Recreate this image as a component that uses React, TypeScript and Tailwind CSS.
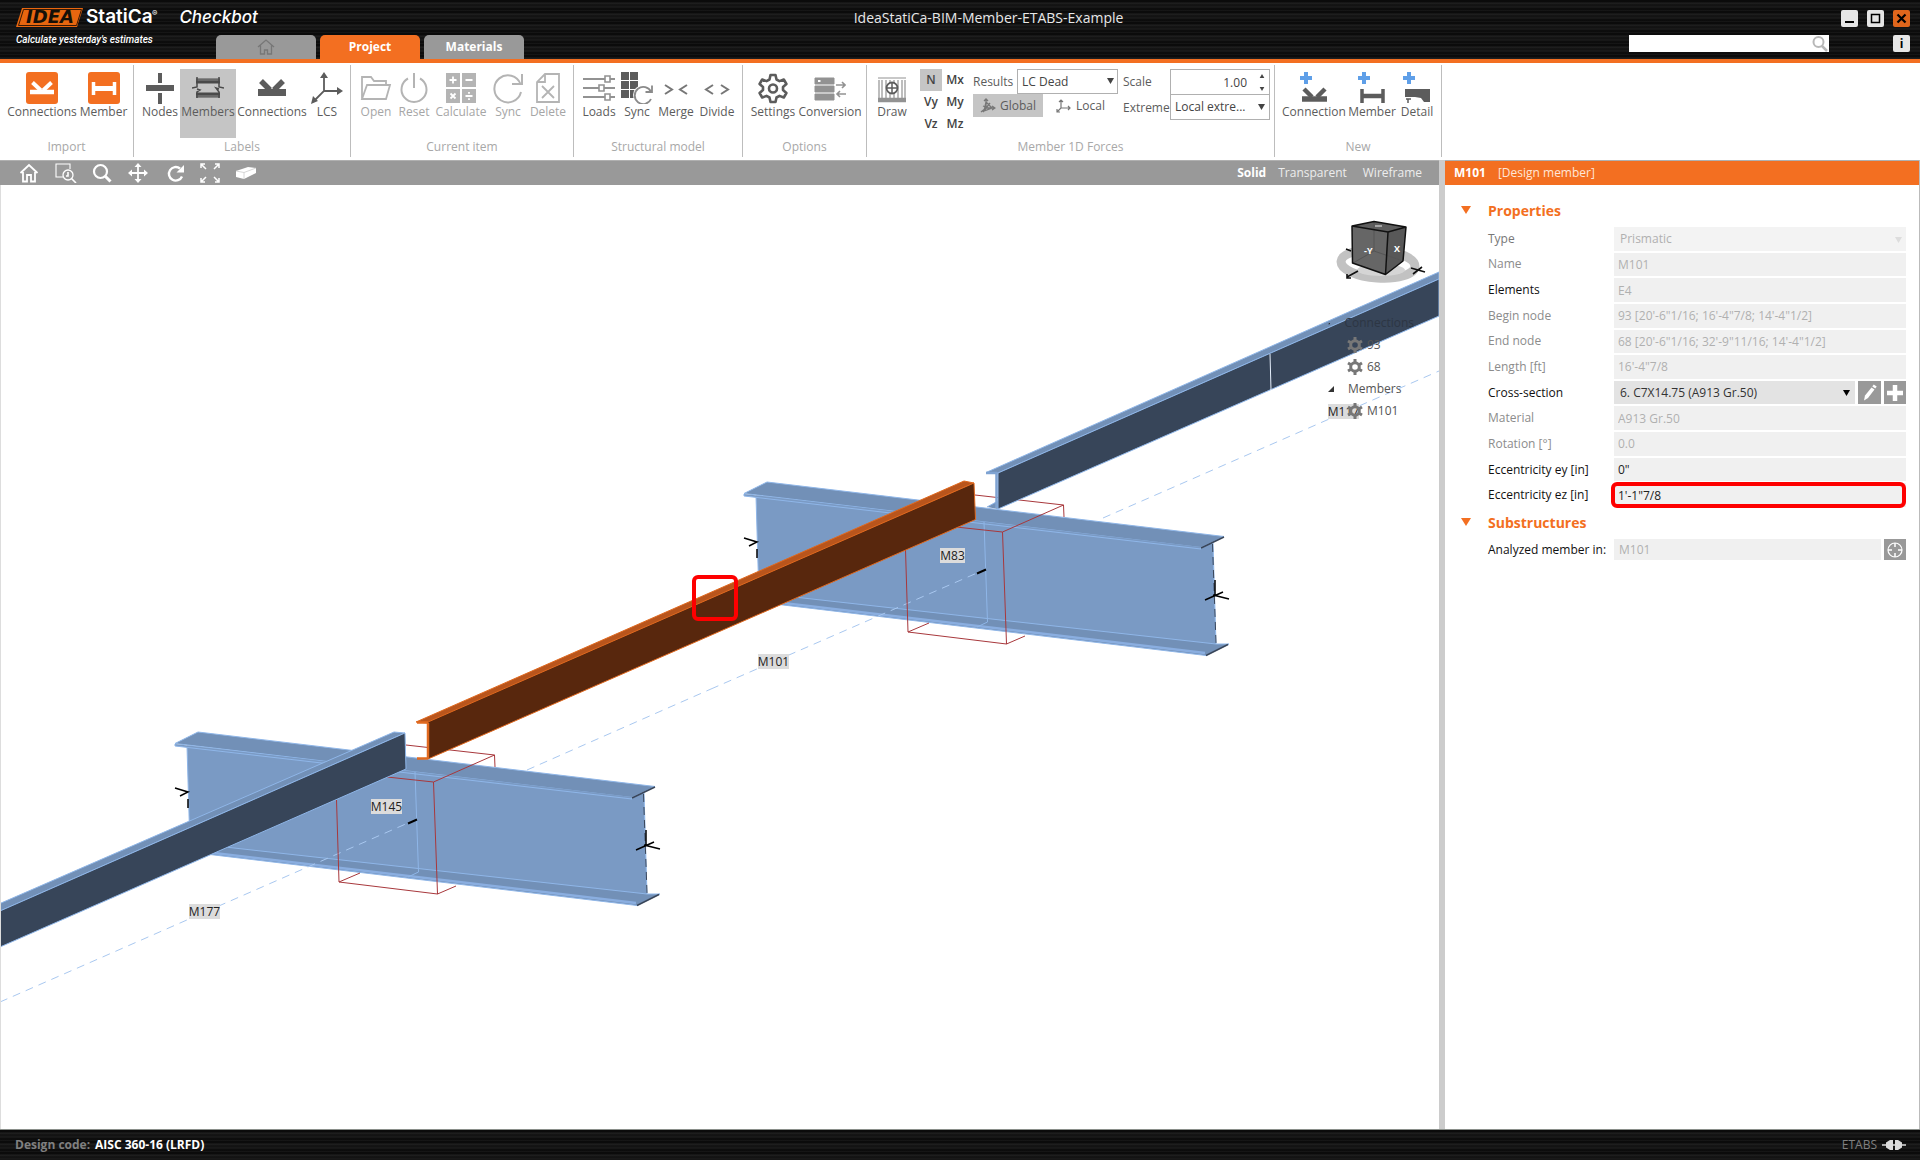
import React, { ReactNode } from "react";

type IconProps = { children: ReactNode; w?: number; h?: number; className?: string };

function Icon({ children, w = 32, h = 32, className = "" }: IconProps) {
  return (
    <svg width={w} height={h} viewBox={`0 0 ${w} ${h}`} fill="none" stroke="currentColor" className={`shrink-0 ${className}`} aria-hidden="true">
      {children}
    </svg>
  );
}

/* ---------- ribbon icons ---------- */

const ImportConnections = () => (
  <Icon>
    <rect x="0" y="0" width="32" height="32" rx="3" fill="#f36f21" stroke="none" />
    <path d="M4 20h24" stroke="#fff" strokeWidth="4.500" />
    <path d="M6.500 10.500L15 18.500M25.500 10.500L17 18.500" stroke="#fff" strokeWidth="4" />
  </Icon>
);
const ImportMember = () => (
  <Icon>
    <rect x="0" y="0" width="32" height="32" rx="3" fill="#f36f21" stroke="none" />
    <path d="M5.500 10v13M26.500 10v13" stroke="#fff" strokeWidth="3.500" />
    <path d="M5 16.500h22" stroke="#fff" strokeWidth="5" />
  </Icon>
);
const NodesIcon = () => (
  <Icon>
    <path d="M2 16h28" strokeWidth="6" />
    <path d="M16 1v10M16 21v11" strokeWidth="4" />
  </Icon>
);
const MembersIcon = () => (
  <Icon className="text-[#4a4a4a]">
    <path d="M4 9h24M4 23h24" strokeWidth="5" />
    <path d="M4 8h24M4 24h24" stroke="#888" strokeWidth="1" />
    <path d="M5 5v10l-5 1M5 17l3 1-3 2v6M27 5v10l5 1M27 17l-3 -1 3 4v6" strokeWidth="1.500" />
  </Icon>
);
const ConnectionsIcon = () => (
  <Icon>
    <path d="M2 20.500h28" strokeWidth="7" />
    <path d="M5 9l9 9M27 9l-9 9" strokeWidth="5.500" />
  </Icon>
);
const LcsIcon = () => (
  <Icon>
    <path d="M13 4v15L3 29M13 19h16" strokeWidth="1.800" />
    <path d="M13 0l4 6H9zM32 19l-6 4v-8zM0 32l2-8 5 5z" fill="currentColor" stroke="none" />
  </Icon>
);
const OpenIcon = () => (
  <Icon className="text-[#b4b4b4]">
    <path d="M8 27H2V5h9l3 4h12v4M2 27L7 13h23l-4 14z" strokeWidth="1.800" />
  </Icon>
);
const ResetIcon = () => (
  <Icon className="text-[#b4b4b4]">
    <path d="M10 6.500a12.500 12.500 0 1 0 12 0M16 1v15" strokeWidth="2" />
  </Icon>
);
const CalculateIcon = () => (
  <Icon className="text-[#b4b4b4]">
    <path d="M1 1h14v14H1zM17 1h14v14H17zM1 17h14v14H1zM17 17h14v14H17z" fill="currentColor" stroke="none" />
    <path d="M4.500 8h7M8 4.500v7M20.500 8h7M5.500 21.500l5 5M10.500 21.500l-5 5M20.500 24h7M24 20v1.800M24 26.200V28" stroke="#fff" strokeWidth="1.800" />
  </Icon>
);
const SyncIcon = () => (
  <Icon className="text-[#b4b4b4]">
    <path d="M28.500 12A13.500 13.500 0 1 0 29 20M30 2v10H20" strokeWidth="2" />
  </Icon>
);
const DeleteIcon = () => (
  <Icon className="text-[#b4b4b4]">
    <path d="M13 2h14v28H5V10zM13 2v8H5" strokeWidth="1.800" />
    <path d="M10 14l12 12M22 14L10 26" strokeWidth="1.800" />
  </Icon>
);
const LoadsIcon = () => (
  <Icon className="text-[#929292]">
    <path d="M0 7h32M0 16h32M0 25h32" strokeWidth="2.200" />
    <path d="M22 4h5v6h-5zM16 13h5v6h-5zM22 22h5v6h-5z" fill="#fff" strokeWidth="1.600" />
  </Icon>
);
const ModelSyncIcon = () => (
  <Icon>
    <path d="M0 0h8v8H0zM9 0h8v8H9zM0 9h8v8H0zM9 9h8v8H9zM0 18h8v8H0zM9 18h8v8H9z" fill="currentColor" stroke="none" />
    <circle cx="22" cy="23" r="10" fill="#fff" stroke="none" />
    <path d="M30 20a8.500 8.500 0 1 0 0 7M31 13.500V20h-6.500" className="text-[#8a8a8a]" strokeWidth="1.800" />
  </Icon>
);
const MergeIcon = () => (
  <Icon className="text-[#777]">
    <path d="M5 13l7 4.500L5 22M27 13l-7 4.500L27 22" strokeWidth="2" />
  </Icon>
);
const DivideIcon = () => (
  <Icon className="text-[#777]">
    <path d="M12 13l-7 4.500 7 4.500M20 13l7 4.500L20 22" strokeWidth="2" />
  </Icon>
);
const SettingsIcon = () => (
  <Icon>
    <path
      d="M13.500 3h5l1 4.500 3 1.600 4.300-1.600 2.600 4.500-3.400 3v3l3.400 3-2.600 4.500-4.300-1.600-3 1.600-1 4.500h-5l-1-4.500-3-1.600-4.300 1.600L2.600 21 6 18v-3l-3.400-3 2.600-4.500 4.300 1.600 3-1.600z"
      strokeWidth="2.600"
      strokeLinejoin="round"
    />
    <circle cx="16" cy="16.500" r="4" strokeWidth="2.600" />
  </Icon>
);
const ConversionIcon = () => (
  <Icon className="text-[#929292]">
    <path d="M1 6h19v6H1zM1 14h19v6H1zM1 22h19v6H1z" fill="currentColor" strokeWidth="1" />
    <path d="M4 9h2.500" stroke="#fff" strokeWidth="2" />
    <path d="M22 13h9M28 10l3 3-3 3M32 22h-9M26 19l-3 3 3 3" strokeWidth="1.600" />
  </Icon>
);
const DrawIcon = () => (
  <Icon>
    <g className="text-[#929292]">
      <path d="M2 6h28M6 8v18M10 8v18M22 8v18M26 8v18M3 8v18M29 8v18M14 8v18M18 8v18" strokeWidth="1.200" />
      <path d="M2 28h28" strokeWidth="4.500" />
    </g>
    <circle cx="16" cy="16" r="5.500" fill="#fff" strokeWidth="1.800" />
    <path d="M16 10v12M10 16h12" strokeWidth="1.500" />
  </Icon>
);
const Plus = () => <path d="M8 0v12M2 6h12" stroke="#5f9fe8" strokeWidth="4" />;
const NewConnectionIcon = () => (
  <Icon>
    <Plus />
    <path d="M4 27h25" strokeWidth="5.500" />
    <path d="M6 17l8 8M27 17l-8 8" strokeWidth="4.500" />
  </Icon>
);
const NewMemberIcon = () => (
  <Icon>
    <Plus />
    <path d="M6 17v14M27 17v14" strokeWidth="3.500" />
    <path d="M6 24h21" strokeWidth="4.500" />
  </Icon>
);
const NewDetailIcon = () => (
  <Icon>
    <Plus />
    <path d="M4 17h25v13h-6l-3-4-6-1H4z" fill="currentColor" stroke="none" />
    <path d="M5 27h5M7 27v4" strokeWidth="1.500" />
  </Icon>
);

/* ---------- ribbon parts ---------- */

function Tool({ label, icon, width, active, disabled }: { label: string; icon: ReactNode; width: string; active?: boolean; disabled?: boolean }) {
  return (
    <button
      type="button"
      disabled={disabled}
      className={`flex h-[69px] shrink-0 flex-col items-center pt-[3px] ${width} ${active ? "bg-[#c5c5c5]" : ""} ${disabled ? "text-[#a6a6a6]" : "text-[#5c5c5c]"}`}
    >
      {icon}
      <span className="text-[12px] leading-4 whitespace-nowrap">{label}</span>
    </button>
  );
}

function Group({ title, width, pad, children }: { title: string; width: string; pad: string; children: ReactNode }) {
  return (
    <section aria-label={title} className={`flex h-[92px] shrink-0 flex-col border-r border-[#bdbdbd] ${width}`}>
      <div className={`flex h-[74px] shrink-0 pt-1 ${pad}`}>{children}</div>
      <div className="text-center text-[12px] leading-4 text-[#a8a8a8]">{title}</div>
    </section>
  );
}

function Arrow({ className = "" }: { className?: string }) {
  return (
    <svg width="7" height="6" viewBox="0 0 7 6" className={className} aria-hidden="true">
      <path d="M0 0h7L3.500 6z" fill="currentColor" />
    </svg>
  );
}

function Force({ children, active }: { children: string; active?: boolean }) {
  return (
    <button type="button" className={`h-[22px] w-[22px] text-[12px] leading-4 font-semibold text-[#444] ${active ? "bg-[#c5c5c5]" : ""}`}>
      {children}
    </button>
  );
}

function Ribbon() {
  return (
    <div className="flex h-[97px] shrink-0 bg-white pt-[2px]">
      <Group title="Import" width="w-[134px]" pad="pl-[9px]">
        <Tool label="Connections" width="w-[66px]" icon={<ImportConnections />} />
        <Tool label="Member" width="w-[57px]" icon={<ImportMember />} />
      </Group>
      <Group title="Labels" width="w-[217px]" pad="pl-[6px]">
        <Tool label="Nodes" width="w-10" icon={<NodesIcon />} />
        <Tool label="Members" width="w-14" active icon={<MembersIcon />} />
        <Tool label="Connections" width="w-[72px]" icon={<ConnectionsIcon />} />
        <Tool label="LCS" width="w-[38px]" icon={<LcsIcon />} />
      </Group>
      <Group title="Current item" width="w-[223px]" pad="pl-[6px]">
        <Tool label="Open" width="w-[38px]" disabled icon={<OpenIcon />} />
        <Tool label="Reset" width="w-[38px]" disabled icon={<ResetIcon />} />
        <Tool label="Calculate" width="w-14" disabled icon={<CalculateIcon />} />
        <Tool label="Sync" width="w-[38px]" disabled icon={<SyncIcon />} />
        <Tool label="Delete" width="w-[42px]" disabled icon={<DeleteIcon />} />
      </Group>
      <Group title="Structural model" width="w-[169px]" pad="pl-1">
        <Tool label="Loads" width="w-[42px]" icon={<LoadsIcon />} />
        <Tool label="Sync" width="w-[34px]" icon={<ModelSyncIcon />} />
        <Tool label="Merge" width="w-11" icon={<MergeIcon />} />
        <Tool label="Divide" width="w-[38px]" icon={<DivideIcon />} />
      </Group>
      <Group title="Options" width="w-[124px]" pad="pl-1">
        <Tool label="Settings" width="w-[52px]" icon={<SettingsIcon />} />
        <Tool label="Conversion" width="w-[62px]" icon={<ConversionIcon />} />
      </Group>
      <Group title="Member 1D Forces" width="w-[408px]" pad="pl-1">
        <Tool label="Draw" width="w-[42px]" icon={<DrawIcon />} />
        <div className="ml-[7px] grid h-[66px] w-[48px] shrink-0 grid-cols-2">
          <Force active>N</Force>
          <Force>Mx</Force>
          <Force>Vy</Force>
          <Force>My</Force>
          <Force>Vz</Force>
          <Force>Mz</Force>
        </div>
        <div className="ml-[5px] flex w-[145px] shrink-0 flex-col text-[12px] leading-4 text-[#5c5c5c]">
          <div className="flex h-[25px] items-center">
            <label htmlFor="results" className="w-11 shrink-0">Results</label>
            <div className="relative h-full flex-1">
              <select id="results" defaultValue="LC Dead" className="h-full w-full appearance-none border border-[#b0b0b0] bg-white pl-1 text-[#444]">
                <option>LC Dead</option>
              </select>
              <Arrow className="pointer-events-none absolute top-[9px] right-1 text-[#444]" />
            </div>
          </div>
          <div className="flex h-[23px]">
            <button type="button" className="flex w-[70px] items-center justify-center gap-1 bg-[#c5c5c5]">
              <Icon w={16} h={16} className="text-[#777]">
                <path d="M6 1v9L1 14M6 10h9M3 8l8 3M10 5l-7 9M12 8l3 2-3 2M4 3l2-2 2 2M6 4l6 6-8 3z" strokeWidth="1.300" />
              </Icon>
              Global
            </button>
            <button type="button" className="flex flex-1 items-center justify-center gap-1">
              <Icon w={16} h={16} className="text-[#777]">
                <path d="M5 2v8L1 14M5 10h9M12 8l2 2-2 2M3 4l2-2 2 2M1 11v3h3" strokeWidth="1.200" />
              </Icon>
              Local
            </button>
          </div>
        </div>
        <div className="ml-[5px] w-[147px] shrink-0 text-[12px] leading-4 text-[#5c5c5c]">
          <div className="flex h-[26px] items-center">
            <label htmlFor="scale" className="w-[47px] shrink-0">Scale</label>
            <div className="relative h-full flex-1">
              <input id="scale" defaultValue="1.00" className="h-full w-full border border-[#b0b0b0] bg-white pr-[22px] text-right text-[#444]" />
              <button type="button" aria-label="Increase" className="absolute top-[5px] right-[5px] text-[#444]">
                <Arrow className="block h-1 w-[6px] rotate-180" />
              </button>
              <button type="button" aria-label="Decrease" className="absolute right-[5px] bottom-1 text-[#444]">
                <Arrow className="block h-1 w-[6px]" />
              </button>
            </div>
          </div>
          <div className="flex h-[25px] items-center">
            <label htmlFor="extreme" className="w-[47px] shrink-0">Extreme</label>
            <div className="relative h-full flex-1">
              <select id="extreme" className="h-full w-full appearance-none border border-t-0 border-[#b0b0b0] bg-white pl-1 text-[#444]">
                <option>Local extre...</option>
              </select>
              <Arrow className="pointer-events-none absolute top-[9px] right-[5px] text-[#444]" />
            </div>
          </div>
        </div>
      </Group>
      <Group title="New" width="w-[167px]" pad="pl-[6px]">
        <Tool label="Connection" width="w-[66px]" icon={<NewConnectionIcon />} />
        <Tool label="Member" width="w-[50px]" icon={<NewMemberIcon />} />
        <Tool label="Detail" width="w-10" icon={<NewDetailIcon />} />
      </Group>
    </div>
  );
}

/* ---------- title bar ---------- */

const METAL =
  "bg-[#101010] bg-[repeating-linear-gradient(180deg,#0b0b0b_0px,#0b0b0b_2px,#222_3px,#101010_5px,#1c1c1c_7px,#080808_9px,#1a1a1a_11px)]";

function Header() {
  return (
    <header className={`flex h-[63px] shrink-0 justify-between border-b-4 border-[#f36f21] ${METAL}`}>
      <div className="flex h-full">
        <div className="w-[216px] shrink-0 pt-1 pl-4 text-white">
          <div className="flex items-center">
            <div className="relative flex h-[26px] w-[68px] shrink-0 items-center justify-center">
              <svg viewBox="0 0 68 26" width="68" height="26" className="absolute inset-0" aria-hidden="true">
                <path d="M6 4h61l-6 19H0z" fill="#e8660f" />
                <path d="M7.500 5.500h58l-5 16H2.500z" fill="none" stroke="#3a1a04" strokeWidth="1" />
              </svg>
              <span className="relative font-['DejaVu_Sans'] text-[18px] leading-5 font-bold text-[#161008] italic">IDEA</span>
            </div>
            <span className="ml-[2px] w-[66px] shrink-0 font-['Inter'] text-[19px] leading-[26px] font-semibold">StatiCa</span>
            <sup className="-top-1 font-['Inter'] text-[8px]">®</sup>
            <span className="ml-[22px] font-['Inter'] text-[17px] leading-[26px] font-medium whitespace-nowrap italic">Checkbot</span>
          </div>
          <div className="font-['Roboto'] text-[10px] leading-5 font-medium whitespace-nowrap italic">Calculate yesterday's estimates</div>
        </div>
        <nav className="flex items-end gap-1 text-[12px] font-bold text-white">
          <button type="button" aria-label="Home" className="flex h-6 w-[100px] items-center justify-center rounded-t-[5px] bg-[#999]">
            <Icon w={18} h={16} className="text-[#777]">
              <path d="M1 8l8-7 8 7M3.500 6.500V15h4v-4h3v4h4V6.500" strokeWidth="1.300" />
            </Icon>
          </button>
          <button type="button" className="h-6 w-[100px] rounded-t-[5px] bg-[#f36f21]">Project</button>
          <button type="button" className="h-6 w-[100px] rounded-t-[5px] bg-[#999]">Materials</button>
        </nav>
      </div>
      <h1 className="flex-1 pt-[10px] pr-[176px] text-center text-[14px] leading-4 text-[#e8e8e8]">IdeaStatiCa-BIM-Member-ETABS-Example</h1>
      <div className="flex flex-col items-end pt-[10px] pr-[10px]">
        <div className="flex gap-[9px] text-black">
          <button type="button" aria-label="Minimize" className="h-[17px] w-[17px] rounded-[2px] bg-[#e6e6e6]">
            <Icon w={17} h={17}><path d="M4 12h9" strokeWidth="2" /></Icon>
          </button>
          <button type="button" aria-label="Maximize" className="h-[17px] w-[17px] rounded-[2px] bg-[#e6e6e6]">
            <Icon w={17} h={17}><path d="M4.500 4.500h8v8h-8z" strokeWidth="1.500" /></Icon>
          </button>
          <button type="button" aria-label="Close" className="h-[17px] w-[17px] rounded-[2px] bg-[#e0661c]">
            <Icon w={17} h={17}><path d="M4.500 4.500l8 8M12.500 4.500l-8 8" strokeWidth="2.200" /></Icon>
          </button>
        </div>
        <div className="mt-2 flex items-center gap-16">
          <div className="relative h-[17px] w-[200px]">
            <input aria-label="Search" className="block h-full w-full bg-white px-1 text-[12px]" />
            <Icon w={17} h={17} className="absolute top-0 right-0 text-[#b8b8b8]">
              <circle cx="6.500" cy="7" r="5" strokeWidth="2" />
              <path d="M10 11l5 5" strokeWidth="2.500" />
            </Icon>
          </div>
          <button type="button" aria-label="Info" className="h-[17px] w-[17px] rounded-[2px] bg-[#e6e6e6] text-center text-[12px] leading-4 font-bold text-black">
            i
          </button>
        </div>
      </div>
    </header>
  );
}

/* ---------- view toolbar ---------- */

function ViewBar() {
  const btn = "flex h-5 items-center justify-center";
  return (
    <div className="flex h-[25px] shrink-0 items-center border-t border-[#b0b0b0] bg-[#999] pr-[17px] text-white">
      <button type="button" aria-label="Home view" className={`${btn} ml-4 w-[26px]`}>
        <Icon w={20} h={20}><path d="M1.500 10L10 2l8.500 8M4 9v9.500h4V12h4v6.500h4V9" strokeWidth="1.800" /></Icon>
      </button>
      <button type="button" aria-label="Zoom window" className={`${btn} ml-3 w-6`}>
        <Icon w={22} h={20}>
          <path d="M8 14H1V1h14v5" strokeWidth="1.100" />
          <circle cx="13" cy="12" r="5" strokeWidth="1.300" /><path d="M16.500 15.500L21 20M13 9v4h-2" strokeWidth="1.600" />
        </Icon>
      </button>
      <button type="button" aria-label="Zoom" className={`${btn} ml-3 w-6`}>
        <Icon w={20} h={20}><circle cx="8.500" cy="8.500" r="6.500" strokeWidth="2.200" /><path d="M13 13l5.500 5.500" strokeWidth="3" /></Icon>
      </button>
      <button type="button" aria-label="Pan" className={`${btn} ml-3 w-6`}>
        <Icon w={20} h={20}>
          <path d="M10 3v14M3 10h14" strokeWidth="1.800" />
          <path d="M10 0l3.500 4h-7zM10 20l3.500-4h-7zM0 10l4-3.500v7zM20 10l-4-3.500v7z" fill="currentColor" stroke="none" />
        </Icon>
      </button>
      <button type="button" aria-label="Rotate" className={`${btn} ml-[14px] w-6`}>
        <Icon w={20} h={20}>
          <path d="M16 13.500A6.800 6.800 0 1 1 14 5.500" strokeWidth="2.400" />
          <path d="M18 2v7.500h-7.500z" fill="currentColor" stroke="none" />
        </Icon>
      </button>
      <button type="button" aria-label="Fit all" className={`${btn} ml-[10px] w-6`}>
        <Icon w={20} h={20}>
          <path d="M1 5V1h4M1 1l5 5M15 1h4v4M19 1l-5 5M1 15v4h4M1 19l5-5M19 15v4h-4M19 19l-5-5" strokeWidth="1.500" />
        </Icon>
      </button>
      <button type="button" aria-label="Perspective" className={`${btn} ml-3 w-6`}>
        <Icon w={20} h={14}>
          <path d="M0 5l12-4 8 1v5L8 13l-8-2z" fill="currentColor" stroke="none" />
          <path d="M0 5l8 1.500L20 2M8 6.500V13" stroke="#ccc" strokeWidth=".8" />
        </Icon>
      </button>
      <div className="ml-auto flex gap-3 text-[12px] leading-4">
        <button type="button" className="font-bold">Solid</button>
        <button type="button" className="text-[#ededed]">Transparent</button>
        <button type="button" className="ml-1 text-[#ededed]">Wireframe</button>
      </div>
    </div>
  );
}

/* ---------- 3D scene ---------- */

const EDGE = "#8fb6e8";

/* Flanges, web and axis marks of one girder. */
function Girder() {
  return (
    <g>
      <path d="M187 746L644 793L647 895L190 848z" fill="#7a9ac4" stroke={EDGE} strokeWidth="1" />
      <path d="M189 843L647 894H660L637 905.500L189 852z" fill="#7290b7" stroke={EDGE} strokeWidth="1" />
      <path d="M189 850L636 903" stroke="#8aaee0" strokeWidth="2.500" />
      <path d="M198 732L655 786.500L632 797.500L175 743.500z" fill="#7290b7" stroke={EDGE} strokeWidth="1" />
      <path d="M175 744v2L632 799v-2" fill="#7a9ac4" stroke={EDGE} strokeWidth="1" />
      <path d="M632 798l23-11M637 905.500l22-11" stroke="#3a4659" strokeWidth="1.500" />
      <path d="M643.500 794L647 893" stroke="#3a4659" strokeWidth="1" strokeDasharray="8 5" />
      <path d="M415 772L418.500 872L408 877" stroke={EDGE} strokeWidth="1" fill="none" />
      <path d="M408 823.500l9-4" stroke="#000" strokeWidth="2" />
      <path d="M646 830v15M636 850l18-8M644 845l16 4" stroke="#000" strokeWidth="1.500" />
      <path d="M175 788l13 4-8 4M188 799v9" stroke="#000" strokeWidth="1.500" fill="none" />
    </g>
  );
}

/* Bounding box of a connection around a girder. */
function ConnectionBox() {
  return (
    <path
      d="M406 745L494.500 755L495 767M494.500 755L433.500 782L387 777M433.500 782L437.500 894L339 882L336.500 800M339 882L360 873M437.500 894L456 886"
      stroke="#a8383c" strokeWidth="1" fill="none"
    />
  );
}

function NodeLabel({ x, y, w, children }: { x: number; y: number; w: number; children: string }) {
  return (
    <g>
      <rect x={x} y={y} width={w} height="15" fill="#dcdcdc" />
      <text x={x + w / 2} y={y + 12} textAnchor="middle" className="fill-[#222] font-['Open_Sans','Noto_Sans',sans-serif] text-[12px]">
        {children}
      </text>
    </g>
  );
}

function Scene() {
  return (
    <svg viewBox="1 185 1438 944" preserveAspectRatio="xMinYMin slice" className="absolute inset-0 h-full w-full" fill="none">
      <g stroke="#a9c8f0" strokeWidth="1" strokeDasharray="8 6">
        <path d="M527 770L711 689" />
        <path d="M1103 518L1439 371" />
      </g>

      <Girder />
      <path d="M0 1002L408 823" stroke="#a9c8f0" strokeWidth="1" strokeDasharray="8 6" />
      <ConnectionBox />
      <path d="M0 903.500L394 732L405 733L0 911z" fill="#7290b7" stroke={EDGE} />
      <path d="M0 911L405 733L406 769L0 947z" fill="#374559" stroke={EDGE} />

      <g transform="translate(569 -250)">
        <Girder />
        <path d="M142 939L408 823" stroke="#a9c8f0" strokeWidth="1" strokeDasharray="8 6" />
        <ConnectionBox />
      </g>

      <path d="M416 722L964 481L974 483L429 723z" fill="#b9551c" stroke="#e0691f" />
      <path d="M428 722L974 483L975.500 519.500L428 759z" fill="#58270d" stroke="#e0691f" />
      <path d="M417 722.500h11M428 723v35M417 758.500h11" stroke="#e0691f" strokeWidth="2.500" />

      <path d="M987 507l11-6v8" fill="#7290b7" stroke={EDGE} />
      <path d="M986 472.500L1439 272L1439 279L998 473z" fill="#7290b7" stroke={EDGE} />
      <path d="M998 473L1439 279L1439 316L998 509z" fill="#374559" stroke={EDGE} />
      <path d="M986 473h11M996.500 473v35" stroke="#7fa3d2" strokeWidth="2.500" />
      <path d="M1270 354l1 36" stroke="#e5eefb" strokeWidth="1" />

      <NodeLabel x={189} y={904} w={31}>M177</NodeLabel>
      <NodeLabel x={371} y={799} w={31}>M145</NodeLabel>
      <NodeLabel x={758} y={654} w={31}>M101</NodeLabel>
      <NodeLabel x={940} y={548} w={25}>M83</NodeLabel>
      <NodeLabel x={1328} y={404} w={31}>M117</NodeLabel>

      <rect x="694" y="577" width="42" height="42" rx="4" stroke="#fe0000" strokeWidth="4" />

      {/* orientation cube */}
      <ellipse cx="1378" cy="264" rx="37" ry="14" stroke="#c2c2c2" strokeWidth="9" transform="rotate(4 1378 264)" />
      <ellipse cx="1381" cy="270" rx="24" ry="6" fill="#d5d5d5" />
      <path d="M1352 226L1388 232L1385.500 274.500L1352.500 263z" fill="#666" />
      <path d="M1388 232L1406 227L1403 261L1385.500 274.500z" fill="#585858" />
      <path d="M1352 226L1374 221.500L1406 227L1388 232z" fill="#5e5e5e" />
      <path d="M1374 222v29l-21 12M1374 251l29 10" stroke="#555" strokeWidth="1" />
      <path d="M1352 226L1388 232L1385.500 274.500L1352.500 263zM1388 232L1406 227L1403 261L1385.500 274.500M1352 226L1374 221.500L1406 227" stroke="#111" strokeWidth="1.500" strokeLinejoin="round" />
      <g className="fill-white font-['Open_Sans',sans-serif] text-[9px] font-bold">
        <text x="1364" y="254">-Y</text>
        <text x="1394" y="252">X</text>
      </g>
      <path d="M1375 226h7" stroke="#eee" strokeWidth="1" />
      <path d="M1411 268l14 4M1413 274l9-7M1347 277l11-6M1347 274v4h4M1346 249l5 2" stroke="#111" strokeWidth="1.600" />
    </svg>
  );
}

function TreeGear() {
  return (
    <Icon w={16} h={16} className="text-[#777]">
      <circle cx="8" cy="8" r="4.300" strokeWidth="3" />
      <path d="M8 0v3M8 13v3M1 4l2.600 1.500M12.400 10.500L15 12M1 12l2.600-1.500M12.400 5.500L15 4" strokeWidth="3" />
    </Icon>
  );
}
function TreeHead({ children, faint }: { children: string; faint?: boolean }) {
  return (
    <li className="flex h-[22px] items-center">
      <svg width="6" height="6" viewBox="0 0 6 6" aria-hidden="true"><path d="M6 0v6H0z" fill="#333" /></svg>
      <span className={`ml-[14px] ${faint ? "text-[#2d3644]" : ""}`}>{children}</span>
    </li>
  );
}
function TreeItem({ children }: { children: string }) {
  return (
    <li className="flex h-[22px] items-center gap-1 pl-[19px]">
      <TreeGear />
      {children}
    </li>
  );
}

function Viewport() {
  return (
    <div className="relative min-h-0 flex-1 overflow-hidden border-l border-[#ddd] bg-white">
      <Scene />
      <ul className="absolute top-[127px] right-[25px] w-[86px] text-[12px] leading-4 text-[#555]">
        <TreeHead faint>Connections</TreeHead>
        <TreeItem>93</TreeItem>
        <TreeItem>68</TreeItem>
        <TreeHead>Members</TreeHead>
        <TreeItem>M101</TreeItem>
      </ul>
    </div>
  );
}

/* ---------- property panel ---------- */

type Prop = { id: string; label: string; value: string; tone: "dim" | "label" | "live" };
const TOP: Prop[] = [
  { id: "name", label: "Name", value: "M101", tone: "dim" },
  { id: "elements", label: "Elements", value: "E4", tone: "label" },
  { id: "begin", label: "Begin node", value: "93 [20'-6\"1/16; 16'-4\"7/8; 14'-4\"1/2]", tone: "dim" },
  { id: "end", label: "End node", value: "68 [20'-6\"1/16; 32'-9\"11/16; 14'-4\"1/2]", tone: "dim" },
  { id: "length", label: "Length [ft]", value: "16'-4\"7/8", tone: "dim" },
];
const BOTTOM: Prop[] = [
  { id: "material", label: "Material", value: "A913 Gr.50", tone: "dim" },
  { id: "rotation", label: "Rotation [°]", value: "0.0", tone: "dim" },
  { id: "ey", label: "Eccentricity ey [in]", value: "0\"", tone: "live" },
  { id: "ez", label: "Eccentricity ez [in]", value: "1'-1\"7/8", tone: "live" },
];

function Field({ p }: { p: Prop }) {
  return (
    <div className="flex items-center">
      <label htmlFor={p.id} className={`w-[126px] shrink-0 ${p.tone === "dim" ? "text-[#8c8c8c]" : "text-[#111]"}`}>{p.label}</label>
      <div className="relative h-full flex-1">
        <input
          id={p.id}
          defaultValue={p.value}
          readOnly={p.tone !== "live"}
          className={`block h-full w-full bg-[#f0f0f0] pl-1 ${p.tone === "live" ? "text-[#222]" : "text-[#b0b0b0]"}`}
        />
        {p.id === "ez" && <div className="pointer-events-none absolute -inset-y-px right-0 -left-[3px] rounded-[6px] border-4 border-[#fe0000]" />}
      </div>
    </div>
  );
}

function SectionTitle({ children }: { children: string }) {
  return (
    <h2 className="flex h-6 items-center text-[14px] font-bold text-[#f36f21]">
      <svg width="10" height="8" viewBox="0 0 10 8" className="mr-[17px] mb-[3px]" aria-hidden="true"><path d="M0 0h10L5 8z" fill="currentColor" /></svg>
      {children}
    </h2>
  );
}

function Panel() {
  return (
    <aside className="flex w-[481px] shrink-0 flex-col border-r border-l-[6px] border-r-[#bbb] border-l-[#ccc] bg-white text-[12px] leading-4">
      <div className="flex h-[25px] shrink-0 items-center gap-3 border-t border-[#b0b0b0] bg-[#f36f21] pl-[9px] text-white">
        <strong>M101</strong>
        <span className="text-[#ffe6d8]">[Design member]</span>
      </div>
      <div className="pt-[14px] pr-[13px] pl-4">
        <SectionTitle>Properties</SectionTitle>
        <div className="mt-1 ml-[27px] grid h-[280px] auto-rows-fr gap-y-[2px]">
          <div className="flex items-center">
            <label htmlFor="type" className="w-[126px] shrink-0 text-[#777]">Type</label>
            <div className="relative h-full flex-1">
              <select id="type" disabled className="block h-full w-full appearance-none bg-[#f3f3f3] pl-[6px] text-[#b0b0b0] opacity-100">
                <option>Prismatic</option>
              </select>
              <Arrow className="pointer-events-none absolute top-[10px] right-1 text-[#ddd]" />
            </div>
          </div>
          {TOP.map((p) => <Field key={p.id} p={p} />)}
          <div className="flex items-center">
            <label htmlFor="section" className="w-[126px] shrink-0 text-[#111]">Cross-section</label>
            <div className="relative h-full flex-1">
              <select id="section" className="block h-full w-full appearance-none bg-[#e3e3e3] pl-[6px] text-[#333]">
                <option>6. C7X14.75 (A913 Gr.50)</option>
              </select>
              <Arrow className="pointer-events-none absolute top-[9px] right-[5px] text-black" />
            </div>
            <button type="button" aria-label="Edit cross-section" className="ml-[3px] flex h-full w-[23px] items-center justify-center bg-[#999] text-white">
              <Icon w={15} h={17}>
                <path d="M9.500 3.500l3 2L6 14l-4 2.500 1-5z" fill="currentColor" stroke="none" />
                <path d="M11 1.500l3 2" strokeWidth="2.500" />
              </Icon>
            </button>
            <button type="button" aria-label="Add cross-section" className="ml-[3px] flex h-full w-[22px] items-center justify-center bg-[#999] text-white">
              <Icon w={16} h={16}><path d="M8 0v16M0 8h16" strokeWidth="4.500" /></Icon>
            </button>
          </div>
          {BOTTOM.map((p) => <Field key={p.id} p={p} />)}
        </div>
        <div className="mt-1">
          <SectionTitle>Substructures</SectionTitle>
        </div>
        <div className="mt-1 ml-[27px] flex h-[21px] items-center">
          <label htmlFor="analyzed" className="w-[126px] shrink-0 whitespace-nowrap text-[#111]">Analyzed member in:</label>
          <input id="analyzed" readOnly defaultValue="M101" className="h-full min-w-0 flex-1 bg-[#f0f0f0] pl-[5px] text-[#b0b0b0]" />
          <button type="button" aria-label="Locate member" className="ml-[3px] flex h-full w-[22px] items-center justify-center bg-[#999] text-white">
            <Icon w={16} h={16}>
              <circle cx="8" cy="8" r="7" strokeWidth="1.200" />
              <path d="M8 1v4M8 11v4M1 8h4M11 8h4" strokeWidth="1.500" />
            </Icon>
          </button>
        </div>
      </div>
    </aside>
  );
}

export default function App() {
  return (
    <div className="flex h-screen flex-col overflow-hidden bg-white font-['Open_Sans','Noto_Sans',sans-serif]">
      <Header />
      <Ribbon />
      <main className="flex min-h-0 flex-1">
        <div className="flex min-w-0 flex-1 flex-col">
          <ViewBar />
          <Viewport />
        </div>
        <Panel />
      </main>
      <footer className={`flex h-[31px] shrink-0 items-center border-t border-[#8a8f8a] pr-[14px] pl-[15px] text-[12px] leading-4 ${METAL}`}>
        <span className="font-bold text-[#808080]">Design code:</span>
        <strong className="ml-[5px] text-white">AISC 360-16 (LRFD)</strong>
        <span className="ml-auto text-[#808080]">ETABS</span>
        <Icon w={24} h={10} className="ml-[5px] text-[#dcdcdc]">
          <path d="M0 5h24" strokeWidth="1.500" />
          <path d="M11 0v10H8L4 7.500v-5L8 0zM13 0v10h3l4-2.500v-5L16 0z" fill="currentColor" stroke="none" />
        </Icon>
      </footer>
    </div>
  );
}
